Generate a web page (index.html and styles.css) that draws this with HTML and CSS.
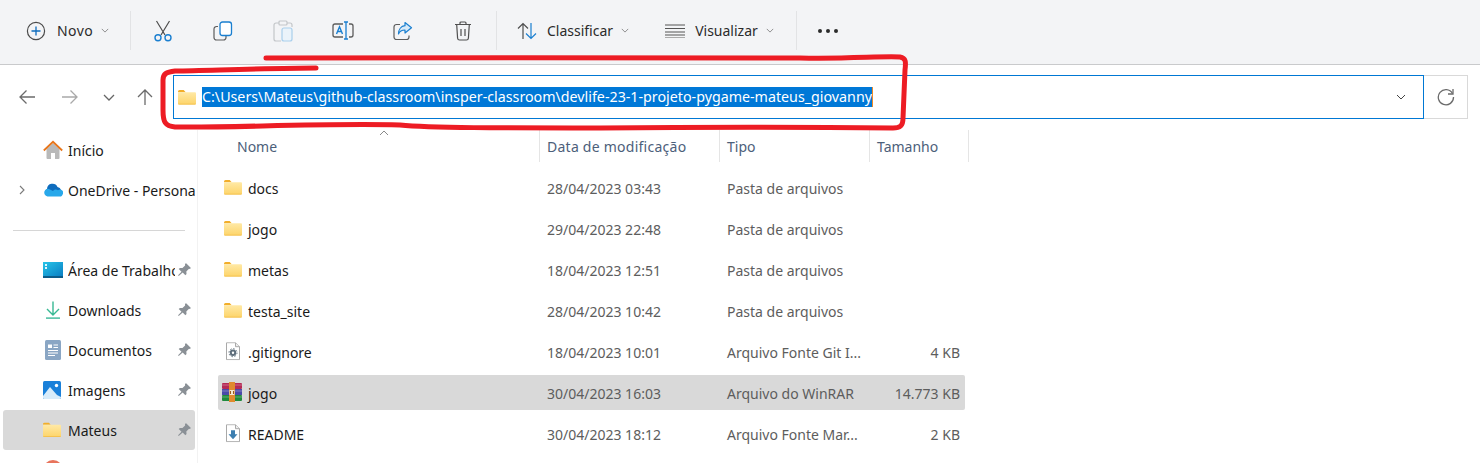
FILE: index.html
```html
<!DOCTYPE html>
<html lang="pt-BR">
<head>
    <meta charset="UTF-8">
    <meta name="viewport" content="width=device-width, initial-scale=1.0">
    <title>devlife-23-1-projeto-pygame-mateus_giovanny</title>
    <link rel="stylesheet" href="styles.css">
</head>
<body>

    <svg class="defs" width="0" height="0">
        <defs>
            <linearGradient id="folder-body" x1="0" y1="0" x2="0" y2="1">
                <stop offset="0" stop-color="#ffe9a6"/>
                <stop offset="1" stop-color="#fdd469"/>
            </linearGradient>
            <symbol id="folder" viewBox="0 0 18 15">
                <path d="M0 1.500A1.500 1.500 0 0 1 1.500 0h4.200l2 2.200H0z" fill="#f2ae2a"/>
                <path d="M0 2.200h17a1 1 0 0 1 1 1v10.300a1 1 0 0 1-1 1H1a1 1 0 0 1-1-1z" fill="url(#folder-body)"/>
                <path d="M0 13.700h18a1 1 0 0 1-1 .8H1a1 1 0 0 1-1-.8z" fill="#f2bb45"/>
            </symbol>
            <symbol id="pin" viewBox="0 0 14 14">
                <path d="M8.300 1l4.700 4.700-1 .9-.8-.2-2.500 2.500.2 2.400-1.100 1.100-2.500-2.600L1.600 13 1 12.400l3.200-3.300-2.600-2.500 1.100-1.100 2.400.2 2.500-2.500-.2-.8z" fill="#8a9096"/>
            </symbol>
            <symbol id="chev" viewBox="0 0 10 6">
                <path d="M1 1l4 4 4-4" fill="none" stroke="currentColor" stroke-width="1"/>
            </symbol>
        </defs>
    </svg>

    <header class="toolbar">
        <button class="tool tool-novo">
            <svg width="20" height="20" viewBox="0 0 20 20"><circle cx="10" cy="10" r="8.600" fill="none" stroke="#4a4a4a" stroke-width="1.200"/><path d="M10 5.500v9M5.500 10h9" stroke="#0f6cbd" stroke-width="1.300"/></svg>
            <span>Novo</span>
            <svg class="chev" width="8" height="5"><use href="#chev"/></svg>
        </button>
        <span class="sep sep-a"></span>
        <div class="icon-tools">
            <span class="icon-tool">
                <svg width="20" height="22" viewBox="0 0 20 22"><path d="M3.500 1l8.500 14M16.500 1L8 15" stroke="#4d4d4d" stroke-width="1.200" fill="none"/><circle cx="5" cy="17.800" r="3" fill="none" stroke="#1a7fd0" stroke-width="1.400"/><circle cx="15" cy="17.800" r="3" fill="none" stroke="#1a7fd0" stroke-width="1.400"/></svg>
            </span>
            <span class="icon-tool">
                <svg width="20" height="20" viewBox="0 0 20 20"><path d="M5 5.500H3.500A2.500 2.500 0 0 0 1 8v8.500A2.500 2.500 0 0 0 3.500 19h7a2.500 2.500 0 0 0 2.500-2.500V15" fill="none" stroke="#5c5c5c" stroke-width="1.200"/><rect x="7" y="1" width="11.500" height="13.500" rx="2.500" fill="#fff" stroke="#1a7fd0" stroke-width="1.300"/></svg>
            </span>
            <span class="icon-tool">
                <svg width="20" height="22" viewBox="0 0 20 22"><path d="M6 3H3a2 2 0 0 0-2 2v14a2 2 0 0 0 2 2h5M14 3h3a2 2 0 0 1 2 2v2" fill="none" stroke="#c3c6c9" stroke-width="1.200"/><rect x="6" y="1" width="8" height="4" rx="1" fill="none" stroke="#c3c6c9" stroke-width="1.200"/><rect x="9" y="8" width="10" height="13" rx="2" fill="#eaf3fa" stroke="#a9cfec" stroke-width="1.200"/></svg>
            </span>
            <span class="icon-tool">
                <svg width="22" height="20" viewBox="0 0 22 20"><path d="M11 3H3a2 2 0 0 0-2 2v9a2 2 0 0 0 2 2h8M17 3h2a2 2 0 0 1 2 2v9a2 2 0 0 1-2 2h-2" fill="none" stroke="#5c5c5c" stroke-width="1.300"/><path d="M12 1h4M12 18h4M14 1v17" stroke="#1a7fd0" stroke-width="1.300"/><path d="M4.500 13L7.500 5.800 10.500 13M5.600 10.500h3.800" fill="none" stroke="#1a7fd0" stroke-width="1.400"/></svg>
            </span>
            <span class="icon-tool">
                <svg width="20" height="20" viewBox="0 0 20 20"><path d="M7 3.500H3.500A2.500 2.500 0 0 0 1 6v10a2.500 2.500 0 0 0 2.500 2.500h10A2.500 2.500 0 0 0 16 16v-1.500" fill="none" stroke="#5c5c5c" stroke-width="1.200"/><path d="M12 1.500l6.500 5.300-6.500 5.200V9C8.500 9 6.500 10.500 5.500 13 5.500 8.500 8 5 12 4.700z" fill="#d8eaf8" stroke="#1a7fd0" stroke-width="1.200" stroke-linejoin="round"/></svg>
            </span>
            <span class="icon-tool">
                <svg width="18" height="20" viewBox="0 0 18 20"><path d="M1 3.500h16M6 3.500V2a1 1 0 0 1 1-1h4a1 1 0 0 1 1 1v1.500M2.700 3.500l.9 13.700A2 2 0 0 0 5.600 19h6.800a2 2 0 0 0 2-1.800l.9-13.700M7 8v7M11 8v7" fill="none" stroke="#4f4f4f" stroke-width="1.200"/></svg>
            </span>
        </div>
        <span class="sep sep-b"></span>
        <button class="tool tool-sort">
            <svg width="20" height="18" viewBox="0 0 20 18"><path d="M6 17V1.500M1 6.500l5-5 5 5" fill="none" stroke="#4f4f4f" stroke-width="1.200"/><path d="M14 1v15.500M9 11.500l5 5 5-5" fill="none" stroke="#1a7fd0" stroke-width="1.200"/></svg>
            <span>Classificar</span>
            <svg class="chev" width="8" height="5"><use href="#chev"/></svg>
        </button>
        <button class="tool tool-view">
            <svg width="20" height="14" viewBox="0 0 20 14"><path d="M0 1h20M0 4.500h20M0 8h20M0 11h20" stroke="#555" stroke-width="1"/><path d="M0 13.500h20" stroke="#aaa" stroke-width="1"/></svg>
            <span>Visualizar</span>
            <svg class="chev" width="8" height="5"><use href="#chev"/></svg>
        </button>
        <span class="sep sep-c"></span>
        <span class="more"><i></i><i></i><i></i></span>
    </header>

    <nav class="navbar">
        <div class="nav-btns">
            <svg class="nav-back" width="16" height="14" viewBox="0 0 16 14"><path d="M16 7H1M7.500 .5L1 7l6.500 6.500" fill="none" stroke="#6b6b6b" stroke-width="1.300"/></svg>
            <svg class="nav-fwd" width="16" height="14" viewBox="0 0 16 14"><path d="M0 7h15M8.500 .5L15 7l-6.500 6.500" fill="none" stroke="#a9a9a9" stroke-width="1.300"/></svg>
            <svg class="nav-down" width="12" height="7" viewBox="0 0 12 7"><path d="M1 1l5 5 5-5" fill="none" stroke="#666" stroke-width="1.300"/></svg>
            <svg class="nav-up" width="16" height="16" viewBox="0 0 16 16"><path d="M8 16V1M1 8l7-7 7 7" fill="none" stroke="#6b6b6b" stroke-width="1.300"/></svg>
        </div>
        <div class="address">
            <svg class="address-folder" width="18" height="15"><use href="#folder"/></svg>
            <span class="address-path">C:\Users\Mateus\github-classroom\insper-classroom\devlife-23-1-projeto-pygame-mateus_giovanny</span>
            <svg class="address-chev" width="10" height="6"><use href="#chev"/></svg>
        </div>
        <div class="refresh">
            <svg width="18" height="18" viewBox="0 0 18 18"><path d="M15.500 5.500A7.600 7.600 0 1 0 16.500 9" fill="none" stroke="#6b6b6b" stroke-width="1.300"/><path d="M16 1v5h-5" fill="none" stroke="#6b6b6b" stroke-width="1.300"/></svg>
        </div>
    </nav>

    <main class="content">
        <aside class="sidebar">
            <div class="side-row">
                <svg class="side-icon" width="20" height="20" viewBox="0 0 20 20"><path d="M3.500 9v9a1 1 0 0 0 1 1h3.500v-6h4v6h3.500a1 1 0 0 0 1-1V9L10 3z" fill="#b9b9b9"/><path d="M.8 10.500L10 1.800l9.200 8.700" fill="none" stroke="#e8751a" stroke-width="1.800"/></svg>
                <span>Início</span>
            </div>
            <div class="side-row">
                <svg class="side-arrow" width="6" height="10" viewBox="0 0 6 10"><path d="M1 1l4 4-4 4" fill="none" stroke="#7a7a7a" stroke-width="1.100"/></svg>
                <svg class="side-icon" width="20" height="14" viewBox="0 0 20 14"><path d="M4 6a5.500 5.500 0 0 1 10.500-2A4 4 0 0 1 18 7L8 12 2 9.500A3.500 3.500 0 0 1 4 6z" fill="#0f6cbd"/><path d="M4.500 13.500a4 4 0 0 1-2.900-5.500 4 4 0 0 1 5.400-1.500l3 1.500a3.200 3.200 0 0 1 5-.7 3.200 3.200 0 0 1 4.500 4.500 2.500 2.500 0 0 1-1.500 1.700z" fill="#28a8ea"/></svg>
                <span class="side-label">OneDrive - Personal</span>
            </div>
            <hr class="side-divider">
            <div class="side-row">
                <svg class="side-icon" width="20" height="16" viewBox="0 0 20 16"><defs><linearGradient id="desk" x1="0" y1="0" x2="1" y2="1"><stop offset="0" stop-color="#27c4e8"/><stop offset="1" stop-color="#0a7fc4"/></linearGradient></defs><rect width="20" height="14" fill="url(#desk)"/><rect y="14" width="20" height="2" fill="#0c5c8a"/><path d="M2 2h2v2H2zM2 5h2v2H2z" fill="#dff6fb"/></svg>
                <span class="side-label side-label-pin">Área de Trabalho</span>
                <svg class="pin" width="15" height="15"><use href="#pin"/></svg>
            </div>
            <div class="side-row">
                <svg class="side-icon" width="20" height="19" viewBox="0 0 20 19"><path d="M10 1v13M4 8.500l6 6 6-6" fill="none" stroke="#37b893" stroke-width="1.400"/><path d="M3 17.700h14" stroke="#62c6ad" stroke-width="1.800"/></svg>
                <span>Downloads</span>
                <svg class="pin" width="15" height="15"><use href="#pin"/></svg>
            </div>
            <div class="side-row">
                <svg class="side-icon" width="20" height="20" viewBox="0 0 20 20"><rect x="2" y="0" width="16" height="20" rx="1.500" fill="#8aa6c4"/><path d="M5 4.500h4v3.500H5z" fill="#fff"/><path d="M10.500 5h4.500M10.500 7.500h4.500M5 10.500h10M5 13h10M5 15.500h7" stroke="#fff" stroke-width="1"/></svg>
                <span>Documentos</span>
                <svg class="pin" width="15" height="15"><use href="#pin"/></svg>
            </div>
            <div class="side-row">
                <svg class="side-icon" width="19" height="18" viewBox="0 0 19 18"><rect width="18" height="18" rx="1.500" fill="#1a80d9"/><circle cx="13.500" cy="4.500" r="1.700" fill="#fff"/><path d="M0 15l7-9 7 8 4 2v.5A1.500 1.500 0 0 1 16.500 18h-15A1.500 1.500 0 0 1 0 16.500z" fill="#d8ecfa"/></svg>
                <span>Imagens</span>
                <svg class="pin" width="15" height="15"><use href="#pin"/></svg>
            </div>
            <div class="side-row side-row-active">
                <svg class="side-icon" width="18" height="15"><use href="#folder"/></svg>
                <span>Mateus</span>
                <svg class="pin" width="15" height="15"><use href="#pin"/></svg>
            </div>
            <div class="side-row">
                <svg class="side-icon side-icon-last" width="20" height="20" viewBox="0 0 20 20"><circle cx="10" cy="10" r="10" fill="#e8745c"/></svg>
            </div>
        </aside>

        <section class="files">
            <div class="file-head">
                <span class="col-nome">Nome</span>
                <span class="col-head col-data">Data de modificação</span>
                <span class="col-head">Tipo</span>
                <span class="col-head">Tamanho</span>
                <svg class="sort-caret" width="10" height="5" viewBox="0 0 10 5"><path d="M1 5l4-4 4 4" fill="none" stroke="#8a8a8a"/></svg>
            </div>

            <div class="file-row">
                <span class="file-name"><svg width="18" height="15"><use href="#folder"/></svg>docs</span>
                <span>28/04/2023 03:43</span><span>Pasta de arquivos</span><span></span>
            </div>
            <div class="file-row">
                <span class="file-name"><svg width="18" height="15"><use href="#folder"/></svg>jogo</span>
                <span>29/04/2023 22:48</span><span>Pasta de arquivos</span><span></span>
            </div>
            <div class="file-row">
                <span class="file-name"><svg width="18" height="15"><use href="#folder"/></svg>metas</span>
                <span>18/04/2023 12:51</span><span>Pasta de arquivos</span><span></span>
            </div>
            <div class="file-row">
                <span class="file-name"><svg width="18" height="15"><use href="#folder"/></svg>testa_site</span>
                <span>28/04/2023 10:42</span><span>Pasta de arquivos</span><span></span>
            </div>
            <div class="file-row">
                <span class="file-name"><svg width="18" height="18" viewBox="0 0 18 18"><path d="M2.500 .5h9l4 4v13h-13z" fill="#fff" stroke="#a9a9a9"/><path d="M11.500 .5v4h4" fill="#eee" stroke="#a9a9a9"/><circle cx="9" cy="10.500" r="2.200" fill="none" stroke="#5f6f7c" stroke-width="2"/><circle cx="9" cy="10.500" r="4" fill="none" stroke="#5f6f7c" stroke-width="1" stroke-dasharray="1.500 1.600"/></svg>.gitignore</span>
                <span>18/04/2023 10:01</span><span>Arquivo Fonte Git I...</span><span class="size">4 KB</span>
            </div>
            <div class="file-row file-row-active">
                <span class="file-name file-name-rar"><svg width="20" height="20" viewBox="0 0 20 20"><rect y="1" width="20" height="6" rx="1" fill="#b52a55"/><rect y="7" width="20" height="6" fill="#4a49a8"/><rect y="13" width="20" height="6" rx="1" fill="#1f8a3c"/><path d="M0 3h20M0 9h20M0 15h20" stroke="#fff" stroke-opacity=".3"/><rect x="7" y="0" width="6" height="20" fill="#e08a2e"/><rect x="7.500" y="8" width="5" height="5" fill="#f4e7cf"/><path d="M8.500 9v3M11.500 9v3" stroke="#9a5a1e"/></svg>jogo</span>
                <span>30/04/2023 16:03</span><span>Arquivo do WinRAR</span><span class="size">14.773 KB</span>
            </div>
            <div class="file-row">
                <span class="file-name"><svg width="18" height="18" viewBox="0 0 18 18"><path d="M2.500 .5h9l4 4v13h-13z" fill="#fff" stroke="#a9a9a9"/><path d="M11.500 .5v4h4" fill="#eee" stroke="#a9a9a9"/><path d="M7 6h4v4h2.500L9 15l-4.500-5H7z" fill="#3d7fb0"/></svg>README</span>
                <span>30/04/2023 18:12</span><span>Arquivo Fonte Mar...</span><span class="size">2 KB</span>
            </div>
        </section>
    </main>

    <svg class="ink" width="1480" height="463" viewBox="0 0 1480 463">
        <path d="M266 58C400 58 700 57 800 58 850 59 880 56 900 57 906 58 906 62 905 70L903 118C903 126 900 128 893 128 800 127 700 127 600 128 500 128 430 128 400 125 320 123 230 128 175 127 165 126 163 122 163 110L163 80C163 74 166 72 175 71 220 70 280 68 316 68" fill="none" stroke="#ed1c24" stroke-width="5" stroke-linecap="round" stroke-linejoin="round"/>
    </svg>

</body>
</html>
```

FILE: styles.css
```css
:root {
    --azul: #0078d4;
    --borda: #e5e5e5;
    --barra: #f3f4f6;
    --texto-cinza: #5d5d5d;
    --selecionado: #d9d9d9;
}

* {
    box-sizing: border-box;
}

html, body {
    height: 100%;
}

body {
    margin: 0;
    background-color: #fff;
    color: #1a1a1a;
    font-family: "Noto Sans", "Open Sans", sans-serif;
    font-size: 14px;
    overflow: hidden;
}

.defs {
    display: block;
    height: 0;
}

/* barra de comandos */
.toolbar {
    display: flex;
    align-items: center;
    height: 65px;
    padding: 0 0 3px 26px;
    background-color: var(--barra);
    border-bottom: 1px solid #c9cacc;
}

.tool {
    display: flex;
    align-items: center;
    padding: 0;
    border: none;
    background: none;
    font: inherit;
    color: #2b2b2b;
}

.tool-novo span {
    margin-left: 11px;
    letter-spacing: .4px;
}

.tool .chev {
    margin-left: 8px;
    color: #777;
}

.tool-sort span,
.tool-view span {
    margin-left: 10px;
}

.tool-sort {
    margin-left: 20px;
}

.tool-view {
    margin-left: 36px;
}

.sep {
    width: 1px;
    height: 39px;
    background-color: #e2e3e5;
}

.sep-a {
    margin-left: 21px;
}

.sep-b {
    margin-left: 3px;
}

.sep-c {
    margin-left: 22px;
}

.icon-tools {
    display: flex;
    margin-left: 2px;
}

.icon-tool {
    display: flex;
    justify-content: center;
    align-items: center;
    width: 60px;
}

.more {
    display: flex;
    gap: 4px;
    margin-left: 21px;
}

.more i {
    width: 4px;
    height: 4px;
    border-radius: 50%;
    background-color: #2b2b2b;
}

/* endereco */
.navbar {
    display: flex;
    align-items: center;
    height: 65px;
    padding: 0 12px 1px 19px;
}

.nav-btns {
    display: flex;
    align-items: center;
    width: 154px;
}

.nav-fwd {
    margin-left: 27px;
}

.nav-down {
    margin-left: 25px;
}

.nav-up {
    margin-left: 22px;
}

.address {
    display: flex;
    align-items: center;
    flex: 1;
    height: 44px;
    padding: 0 17px 0 4px;
    border: 1px solid var(--azul);
}

.address-folder {
    flex: none;
}

.address-path {
    margin-left: 6px;
    padding: 0;
    background-color: #0078d7;
    border-right: 1px solid #f08a24;
    color: #fff;
    font-size: 14.25px;
    line-height: 20px;
    white-space: nowrap;
}

.address-chev {
    margin-left: auto;
    color: #444;
}

.refresh {
    display: flex;
    justify-content: center;
    align-items: center;
    width: 44px;
    height: 44px;
    border: 1px solid #d9d9d9;
    border-left: none;
}

/* conteudo */
.content {
    display: flex;
    height: 333px;
}

.sidebar {
    flex: none;
    width: 198px;
    padding: 0 2px 0 3px;
    border-right: 1px solid #f2f2f2;
    overflow: hidden;
}

.side-row {
    position: relative;
    display: flex;
    align-items: center;
    height: 40px;
    padding-left: 65px;
    border-radius: 3px;
    white-space: nowrap;
}

.side-row-active {
    background-color: var(--selecionado);
}

.side-icon {
    position: absolute;
    left: 40px;
    top: 50%;
    transform: translateY(-50%);
}

.side-icon-last {
    top: 10px;
    transform: none;
}

.side-arrow {
    position: absolute;
    left: 16px;
    top: 15px;
}

.side-label {
    overflow: hidden;
}

.side-label-pin {
    width: 107px;
}

.pin {
    position: absolute;
    right: 3px;
    top: 12px;
}

.side-divider {
    height: 1px;
    margin: 20px 10px 19px 10px;
    border: none;
    background-color: #d6d6d6;
}

/* lista de arquivos */
.files {
    flex: 1;
    padding-left: 20px;
}

.file-head {
    position: relative;
    display: grid;
    grid-template-columns: 321px 180px 150px 100px;
    height: 32px;
    align-items: center;
    color: #4c607a;
}

.col-nome {
    padding-left: 19px;
}

.col-head {
    align-self: stretch;
    display: flex;
    align-items: center;
    padding-left: 7px;
    border-left: 1px solid var(--borda);
}

.col-data {
    letter-spacing: .25px;
}

.col-head:last-of-type {
    border-right: 1px solid var(--borda);
}

.sort-caret {
    position: absolute;
    left: 161px;
    top: 0;
}

.file-row {
    display: grid;
    grid-template-columns: 329px 180px 150px 88px;
    align-items: center;
    width: 747px;
    height: 35px;
    margin-bottom: 6px;
    padding-top: 2px;
    border-radius: 2px;
    color: var(--texto-cinza);
    white-space: nowrap;
}

.file-head + .file-row {
    margin-top: 8px;
}

.file-row-active {
    background-color: var(--selecionado);
}

.file-name {
    position: relative;
    padding-left: 30px;
    color: #1a1a1a;
}

.file-name svg {
    position: absolute;
    left: 6px;
    top: 50%;
    transform: translateY(-60%);
}

.file-name-rar svg {
    left: 4px;
}

.size {
    padding-right: 5px;
    text-align: right;
}

/* marcacao em vermelho por cima do print */
.ink {
    position: absolute;
    left: 0;
    top: 0;
    pointer-events: none;
}
```
